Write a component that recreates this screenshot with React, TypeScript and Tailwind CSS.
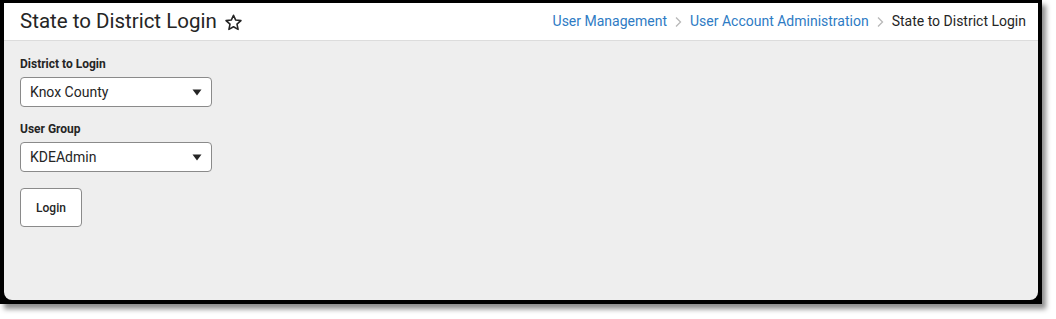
export default function App() {
  return (
    <div className="w-[1056px] h-[319px] bg-white font-['Roboto','Liberation_Sans',sans-serif]">
      <div className="w-[1042px] h-[304px] bg-black pt-[3px] pl-[4px] pr-[4px] pb-[4px] shadow-[4px_5px_5px_rgba(0,0,0,0.45)]">
        <div className="h-full flex flex-col bg-[#eeeeee] rounded-b-[8px] overflow-hidden">
          {/* header */}
          <div className="h-[38px] flex items-center justify-between bg-white border-b border-[#dcdcdc] pl-4 pr-[12px]">
            <div className="flex items-center gap-[7px]">
              <h1 className="text-[20.5px] text-[#252525] leading-none">State to District Login</h1>
              <svg className="w-[19px] h-[19px] mt-[1px]" viewBox="0 0 24 24" fill="none" stroke="#252525" strokeWidth={2} strokeLinejoin="round">
                <path d="M12 2.8l2.8 6.1 6.6.7-5 4.5 1.4 6.6L12 17.3l-5.8 3.4 1.4-6.6-5-4.5 6.6-.7z" />
              </svg>
            </div>
            <nav className="flex items-center text-[14px] gap-[6.5px]">
              <span className="text-[#2e7bc4]">User Management</span>
              <Chevron />
              <span className="text-[#2e7bc4]">User Account Administration</span>
              <Chevron />
              <span className="text-[#252525]">State to District Login</span>
            </nav>
          </div>

          {/* form */}
          <div className="flex flex-col pl-4 pt-[16px]">
            <label className="text-[12px] font-bold text-[#252525] leading-[14px]">District to Login</label>
            <Select value="Knox County" />
            <label className="text-[12px] font-bold text-[#252525] leading-[14px] mt-[15px]">User Group</label>
            <Select value="KDEAdmin" />
            <button className="mt-[16px] w-[62px] h-[39px] bg-white border border-[#8a8a8a] rounded-[4px] text-[12px] font-medium text-[#252525]">
              Login
            </button>
          </div>
        </div>
      </div>
    </div>
  );
}

function Chevron() {
  return (
    <svg className="w-[10px] h-[12px]" viewBox="0 0 10 12" fill="none" stroke="#b8b8b8" strokeWidth={1.3}>
      <path d="M3 1.5l4.5 4.5L3 10.5" />
    </svg>
  );
}

function Select({ value }: { value: string }) {
  return (
    <div className="mt-[6px] w-[192px] h-[30px] flex items-center justify-between bg-white border border-[#8a8a8a] rounded-[4px] pl-[9px] pr-[9px]">
      <span className="text-[14px] text-[#252525]">{value}</span>
      <svg className="w-[10px] h-[7px]" viewBox="0 0 10 7" fill="#252525">
        <path d="M0.5 0.5h9L5 6.5z" />
      </svg>
    </div>
  );
}
